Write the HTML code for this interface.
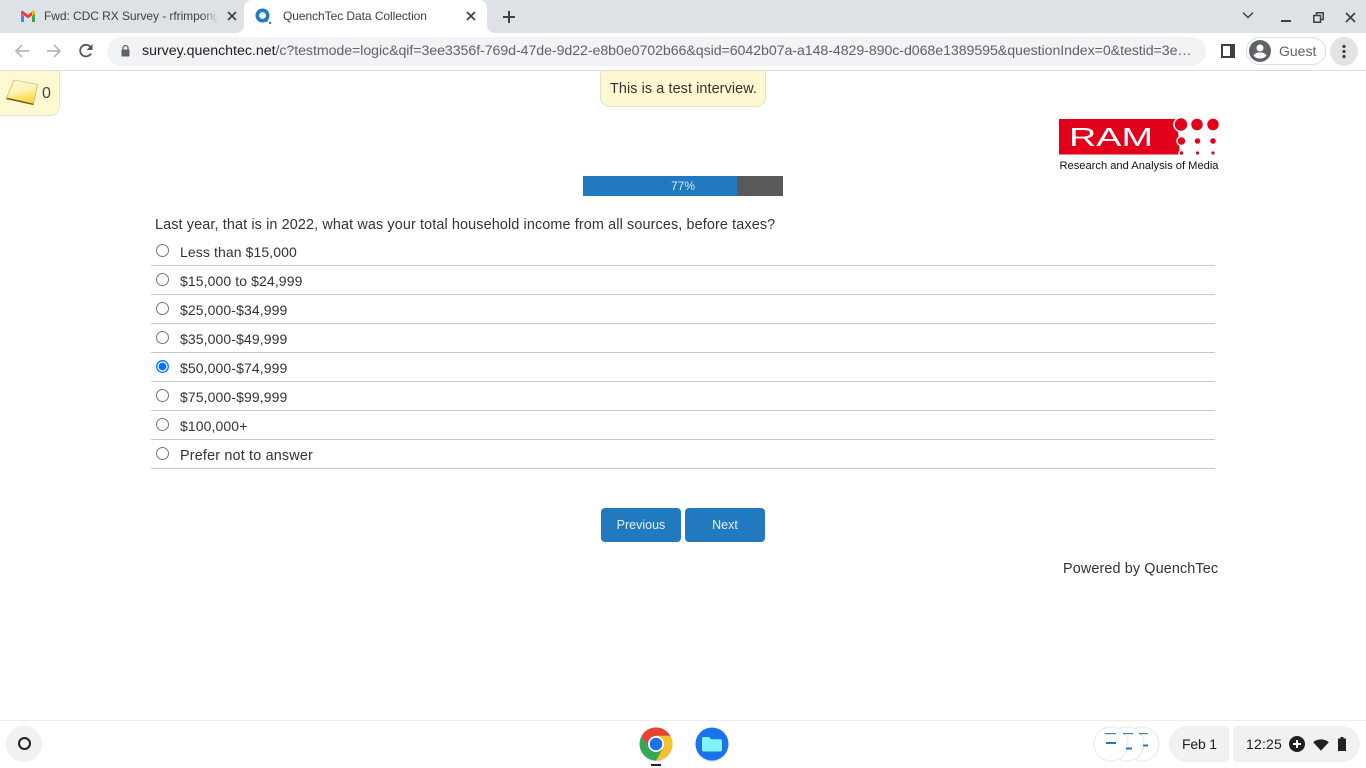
<!DOCTYPE html>
<html><head><meta charset="utf-8"><title>QuenchTec Data Collection</title>
<style>
html,body{margin:0;padding:0;width:1366px;height:768px;overflow:hidden;background:#fff;font-family:"Liberation Sans",sans-serif}
.t{position:absolute;white-space:nowrap;line-height:20px;height:20px}
.b{position:absolute}
.s{font-size:14.4px;color:#333;letter-spacing:.12px}
.d{font-size:14px;letter-spacing:.1px}
.c{font-size:12px;color:#3c4043}
.l{position:absolute;left:151px;width:1064px;height:1px;background:#c8c8c8}
.r{position:absolute;left:156px;width:11px;height:11px;border:1px solid #767676;border-radius:50%;background:#fff}
.btn{position:absolute;top:508px;height:34px;background:#2179bf;border-radius:4px;color:#e8f1f8;font-size:12.5px;line-height:35px;text-align:center}
</style></head><body>
<!-- tab strip -->
<div class="b" style="left:0;top:0;width:1366px;height:33px;background:#dee1e6"></div>
<div class="b" style="left:244px;top:0;width:243px;height:33px;background:#fff;border-radius:8px 8px 0 0"></div>
<svg class="b" style="left:236px;top:25px" width="260" height="8"><path d="M0 8a8 8 0 0 0 8-8v8zM259 8a8 8 0 0 1-8-8v8z" fill="#fff"/></svg>
<svg class="b" style="left:20px;top:10px" width="16" height="13" viewBox="0 0 16 13"><path d="M1 12V3l7 5 7-5v9h-3V6L8 9 4 6v6z" fill="#fff"/><path d="M1 12h3V6L1 3.500z" fill="#4285f4"/><path d="M12 12h3V3.500L12 6z" fill="#34a853"/><path d="M1 3.500V2c0-1 1.200-1.600 2-1l5 3.800L13 1c.8-.6 2 0 2 1v1.500L8 8.500z" fill="#ea4335"/><path d="M12 1.800 15 1v2.500L12 6z" fill="#fbbc04"/></svg>
<div class="t c" style="left:44px;top:6px;width:174px;overflow:hidden;letter-spacing:-.06px">Fwd: CDC RX Survey - rfrimpong@</div>
<div class="b" style="left:202px;top:6px;width:16px;height:20px;background:linear-gradient(90deg,rgba(222,225,230,0),#dee1e6)"></div>
<svg class="b" style="left:227px;top:11px" width="10" height="10"><path d="M1 1l8 8M9 1L1 9" stroke="#3c4043" stroke-width="1.600"/></svg>
<svg class="b" style="left:255px;top:8px" width="17" height="17" viewBox="0 0 17 17"><circle cx="7.500" cy="7.500" r="5.200" fill="none" stroke="#1f7ac4" stroke-width="3.600"/><path d="M9.500 10.500l3 3" stroke="#1f7ac4" stroke-width="2"/><circle cx="15" cy="15" r="1.200" fill="#1f7ac4"/></svg>
<div class="t c" style="left:283px;top:6px;letter-spacing:-.06px">QuenchTec Data Collection</div>
<svg class="b" style="left:466px;top:11px" width="10" height="10"><path d="M1 1l8 8M9 1L1 9" stroke="#3c4043" stroke-width="1.600"/></svg>
<svg class="b" style="left:502px;top:10px" width="14" height="14"><path d="M7 1v12M1 7h12" stroke="#3c4043" stroke-width="2"/></svg>
<svg class="b" style="left:1242px;top:11px" width="12" height="9"><path d="M1 1.500l5 5 5-5" fill="none" stroke="#3c4043" stroke-width="1.500"/></svg>
<div class="b" style="left:1281px;top:20px;width:10px;height:2px;background:#3c4043"></div>
<svg class="b" style="left:1313px;top:12px" width="11" height="11"><path d="M3.500 3V.8h6.700v6.700H8M.8 3.500h6.700v6.700H.8z" fill="none" stroke="#3c4043" stroke-width="1.500"/></svg>
<svg class="b" style="left:1345px;top:12px" width="11" height="11"><path d="M1 1l9 9M10 1l-9 9" stroke="#3c4043" stroke-width="1.600"/></svg>
<!-- toolbar -->
<div class="b" style="left:0;top:70px;width:1366px;height:1px;background:#dadce0"></div>
<svg class="b" style="left:14px;top:43px" width="16" height="16"><path d="M15 8H2M8 2 2 8l6 6" fill="none" stroke="#b6b8bb" stroke-width="1.700"/></svg>
<svg class="b" style="left:46px;top:43px" width="16" height="16"><path d="M1 8h13M8 2l6 6-6 6" fill="none" stroke="#b6b8bb" stroke-width="1.700"/></svg>
<svg class="b" style="left:78px;top:43px" width="16" height="16" viewBox="0 0 16 16"><path d="M13 10.500A5.800 5.800 0 1 1 12.500 4" fill="none" stroke="#53565a" stroke-width="1.800"/><path d="M14.500 1v6h-6z" fill="#53565a"/></svg>
<div class="b" style="left:107px;top:37px;width:1099px;height:29px;background:#f1f3f4;border-radius:15px"></div>
<svg class="b" style="left:120px;top:44px" width="12" height="14"><rect x="1.500" y="5.500" width="8" height="7" rx="1" fill="#5f6368"/><path d="M3 6V4a2.500 2.500 0 0 1 5 0v2" fill="none" stroke="#5f6368" stroke-width="1.300"/></svg>
<div class="t" style="left:142px;top:41px;width:1056px;overflow:hidden;font-size:14.2px;color:#5f6368;letter-spacing:-.07px"><span style="color:#202124;letter-spacing:-.015px">survey.quenchtec.net</span>/c?testmode=logic&amp;qif=3ee3356f-769d-47de-9d22-e8b0e0702b66&amp;qsid=6042b07a-a148-4829-890c-d068e1389595&amp;questionIndex=0&amp;testid=3e…</div>
<svg class="b" style="left:1221px;top:44px" width="14" height="14"><rect x="1" y="1" width="12" height="12" fill="none" stroke="#3c4043" stroke-width="2"/><rect x="9" y="1" width="4" height="12" fill="#3c4043"/></svg>
<div class="b" style="left:1246px;top:37px;width:78px;height:26px;border:1px solid #dadce0;border-radius:14px"></div>
<svg class="b" style="left:1249px;top:40px" width="22" height="22" viewBox="0 0 22 22"><circle cx="11" cy="11" r="11" fill="#5f6368"/><circle cx="11" cy="8" r="3.500" fill="#fff"/><path d="M4.500 15.500c1.500-2.500 4-3 6.500-3s5 .5 6.500 3c-1.500 2-4 3-6.500 3s-5-1-6.500-3z" fill="#fff"/></svg>
<div class="t" style="left:1279px;top:41px;font-size:14px;color:#5f6368">Guest</div>
<div class="b" style="left:1330px;top:37px;width:28px;height:29px;background:#e3e3e3;border-radius:50%"></div>
<svg class="b" style="left:1342px;top:44px" width="4" height="16"><circle cx="2" cy="2.500" r="1.600" fill="#3c4043"/><circle cx="2" cy="7.500" r="1.600" fill="#3c4043"/><circle cx="2" cy="12.500" r="1.600" fill="#3c4043"/></svg>
<!-- sticky -->
<div class="b" style="left:0;top:71px;width:59px;height:44px;background:#fef9d0;border:solid #e6e4cf;border-width:0 1px 1px 0;border-radius:0 0 10px 0"></div>
<svg class="b" style="left:5px;top:78px" width="34" height="30" viewBox="0 0 34 30"><defs><linearGradient id="g" x1=".3" y1="0" x2=".6" y2="1"><stop offset="0" stop-color="#fdf9d8"/><stop offset=".5" stop-color="#fdf3b0"/><stop offset=".62" stop-color="#fce97f"/><stop offset="1" stop-color="#f9d63a"/></linearGradient></defs><path d="M9 2 32.500 6.500 28.500 26 1.500 20z" fill="url(#g)" stroke="#b5a766" stroke-width=".6"/><path d="M1.500 20.500C10 22 20 24.500 28.500 26.500" fill="none" stroke="#6b5a1e" stroke-width="1.400"/></svg>
<div class="t" style="left:42px;top:84px;font-size:16px;color:#444">0</div>
<!-- test banner -->
<div class="b" style="left:600px;top:71px;width:164px;height:35px;background:#fef8d0;border:solid #e2e0c8;border-width:0 1px 1px 1px;border-radius:0 0 10px 10px"></div>
<div class="t s" style="left:610px;top:79px;letter-spacing:.09px;line-height:21px">This is a test interview.</div>
<!-- RAM logo -->
<svg class="b" style="left:1059px;top:117px" width="162" height="56" viewBox="0 0 162 56"><path d="M0 2H118L121 37.500H0z" fill="#e2001a"/><g fill="#e2001a" stroke="#fff" stroke-width="1.500"><circle cx="122" cy="7.500" r="7"/><circle cx="138" cy="7.500" r="6.500"/><circle cx="154" cy="7.500" r="6.500"/><circle cx="122.500" cy="24" r="4.500"/><circle cx="138.500" cy="24" r="3.500"/><circle cx="154" cy="24" r="3.500"/><circle cx="122.500" cy="36" r="2.500"/></g><circle cx="138.500" cy="36" r="1.600" fill="#e2001a"/><circle cx="154" cy="36" r="1.600" fill="#e2001a"/><text x="10" y="29" font-family="Liberation Sans" font-size="26" fill="#fff" textLength="84" lengthAdjust="spacingAndGlyphs">RAM</text><text x="0.500" y="52" font-family="Liberation Sans" font-size="11" fill="#111" textLength="159" lengthAdjust="spacingAndGlyphs">Research and Analysis of Media</text></svg>
<!-- progress -->
<div class="b" style="left:583px;top:176px;width:154px;height:20px;background:#2179bf"></div>
<div class="b" style="left:737px;top:176px;width:46px;height:20px;background:#595959"></div>
<div class="t" style="left:583px;top:176px;width:200px;text-align:center;font-size:12px;color:#dcebf6">77%</div>
<!-- question -->
<div class="t s" style="left:155px;top:214.500px">Last year, that is in 2022, what was your total household income from all sources, before taxes?</div>
<div class="r" style="top:244px"></div><div class="t s d" style="left:180px;top:242px">Less than $15,000</div><div class="l" style="top:265px"></div>
<div class="r" style="top:273px"></div><div class="t s d" style="left:180px;top:271px">$15,000 to $24,999</div><div class="l" style="top:294px"></div>
<div class="r" style="top:302px"></div><div class="t s d" style="left:180px;top:300px">$25,000-$34,999</div><div class="l" style="top:323px"></div>
<div class="r" style="top:331px"></div><div class="t s d" style="left:180px;top:329px">$35,000-$49,999</div><div class="l" style="top:352px"></div>
<svg class="b" style="left:156px;top:360px" width="13" height="13"><circle cx="6.500" cy="6.500" r="5.800" fill="#fff" stroke="#0075ff" stroke-width="1.300"/><circle cx="6.500" cy="6.500" r="3.900" fill="#0075ff"/></svg><div class="t s d" style="left:180px;top:358px">$50,000-$74,999</div><div class="l" style="top:381px"></div>
<div class="r" style="top:389px"></div><div class="t s d" style="left:180px;top:387px">$75,000-$99,999</div><div class="l" style="top:410px"></div>
<div class="r" style="top:418px"></div><div class="t s d" style="left:180px;top:416px">$100,000+</div><div class="l" style="top:439px"></div>
<div class="r" style="top:447px"></div><div class="t s" style="left:180px;top:446px;letter-spacing:.17px">Prefer not to answer</div><div class="l" style="top:468px"></div>
<div class="btn" style="left:601px;width:80px">Previous</div>
<div class="btn" style="left:685px;width:80px">Next</div>
<div class="t s" style="left:1063px;top:559px">Powered by QuenchTec</div>
<!-- shelf -->
<div class="b" style="left:0;top:720px;width:1366px;height:1px;background:#ededed"></div>
<div class="b" style="left:6px;top:726px;width:36px;height:36px;background:#f1f1f1;border-radius:50%"></div>
<div class="b" style="left:18px;top:737px;width:9px;height:9px;border:2px solid #202124;border-radius:50%"></div>
<svg class="b" style="left:639px;top:727px" width="34" height="36" viewBox="0 0 34 36"><circle cx="17" cy="18.500" r="16" fill="#000" opacity=".12"/><circle cx="17" cy="17" r="16.500" fill="#34a853"/><path d="M2.700 8.750A16.500 16.500 0 0 1 31.300 8.750H17z" fill="#ea4335"/><path d="M2.700 8.750 10 21l7-4L17 8.750z" fill="#ea4335"/><path d="M31.300 8.750A16.500 16.500 0 0 1 17 33.500L24.200 21 17 8.750z" fill="#fbc02d"/><circle cx="17" cy="17" r="8" fill="#fff"/><circle cx="17" cy="17" r="6.300" fill="#1a73e8"/></svg>
<div class="b" style="left:651px;top:764px;width:10px;height:2px;background:#202124"></div>
<svg class="b" style="left:695px;top:727px" width="34" height="36" viewBox="0 0 34 36"><circle cx="17" cy="18.500" r="16.500" fill="#000" opacity=".12"/><circle cx="17" cy="17" r="16.500" fill="#1a73e8"/><path d="M7 11.500c0-.8.700-1.500 1.500-1.500h5.500l2.200 2.200h9.300c.8 0 1.500.7 1.500 1.500V23c0 .8-.7 1.500-1.500 1.500H8.500C7.700 24.500 7 23.800 7 23z" fill="#7ff5fb"/></svg>
<!-- tray -->
<svg class="b" style="left:1093px;top:726px" width="68" height="36"><g fill="#fff" stroke="#efefef" stroke-width="1.500"><circle cx="49" cy="18" r="17"/><circle cx="34" cy="18" r="17"/><circle cx="18" cy="18" r="17"/></g><g fill="#4b7fa8"><rect x="12" y="7" width="11" height="1.200"/><rect x="30" y="7" width="10" height="1.200"/><rect x="46" y="7" width="9" height="1.200"/></g><g fill="#2179bf"><rect x="13" y="16" width="10" height="2"/><rect x="33" y="21.500" width="6" height="2"/><rect x="50" y="18.500" width="5" height="2"/></g></svg>
<div class="b" style="left:1169px;top:726px;width:60px;height:36px;background:#f1f1f1;border-radius:18px 4px 4px 18px"></div>
<div class="t" style="left:1182px;top:734px;font-size:14px;color:#202124;letter-spacing:-.2px">Feb 1</div>
<div class="b" style="left:1233px;top:726px;width:127px;height:36px;background:#f1f1f1;border-radius:4px 18px 18px 4px"></div>
<div class="t" style="left:1246px;top:734px;font-size:14px;color:#202124;letter-spacing:.2px">12:25</div>
<svg class="b" style="left:1289px;top:736px" width="16" height="16"><circle cx="8" cy="8" r="8" fill="#202124"/><path d="M8 4v8M4 8h8" stroke="#fff" stroke-width="2"/></svg>
<svg class="b" style="left:1313px;top:738px" width="16" height="13"><path d="M.2 4.200C4.500.500 11.500.500 15.800 4.200L8 12.800z" fill="#202124"/></svg>
<svg class="b" style="left:1337px;top:736px" width="10" height="16"><path d="M3.500 1h3v1.500H9V15H1V2.500h2.500z" fill="#202124"/></svg>
</body></html>
